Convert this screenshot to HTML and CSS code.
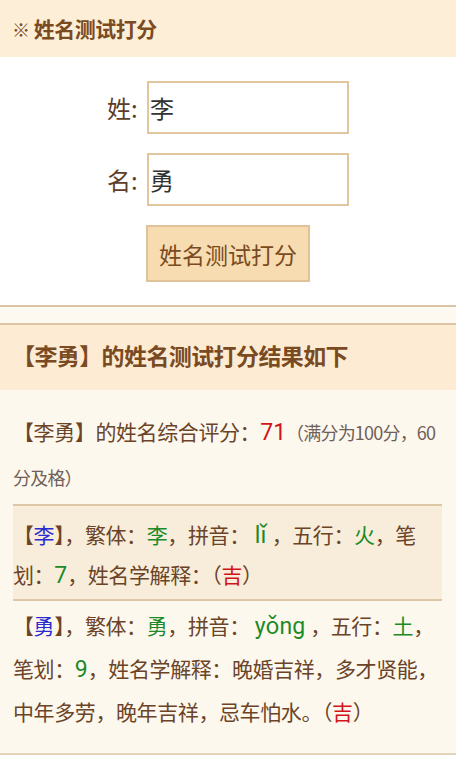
FILE: index.html
```html
<!DOCTYPE html>
<html lang="zh">
<head>
<meta charset="utf-8">
<link rel="stylesheet" href="styles.css">
</head>
<body>
<div class="page">
  <div class="top-title"><span class="mark">※</span> 姓名测试打分</div>
  <form class="form">
    <div class="row"><label class="lbl">姓:</label><input class="inp" type="text" value="李"></div>
    <div class="row"><label class="lbl">名:</label><input class="inp" type="text" value="勇"></div>
    <div class="btn-row"><button type="button" class="btn">姓名测试打分</button></div>
  </form>
  <div class="sep"></div>
  <div class="result-title">【李勇】的姓名测试打分结果如下</div>
  <div class="result">
    <p class="para score">【李勇】的姓名综合评分：<span class="red num">71</span><span class="note">（满分为100分，60分及格）</span></p>
    <p class="para box">【<span class="blue">李</span>】，繁体：<span class="green">李</span>，拼音：<span class="green py">lǐ</span>，五行：<span class="green">火</span>，笔划：<span class="green num">7</span>，姓名学解释：（<span class="red">吉</span>）</p>
    <p class="para last">【<span class="blue">勇</span>】，繁体：<span class="green">勇</span>，拼音：<span class="green py">yǒng</span>，五行：<span class="green">土</span>，笔划：<span class="green num">9</span>，姓名学解释：晚婚吉祥，多才贤能，中年多劳，晚年吉祥，忌车怕水。（<span class="red">吉</span>）</p>
  </div>
</div>
</body>
</html>
```
FILE: styles.css
```css
html, body {
  margin: 0;
  padding: 0;
  background: #ffffff;
}
body {
  font-family: "Noto Sans CJK SC", "Noto Sans", sans-serif;
  color: #6b4428;
}
.page {
  width: 456px;
}
.top-title {
  background: #fdefd7;
  height: 57px;
  line-height: 56px;
  padding-left: 12px;
  font-size: 21px;
  font-weight: bold;
  color: #7a4a22;
  letter-spacing: -0.5px;
}
.mark {
  font-size: 18px;
}
.form {
  background: #ffffff;
  padding: 24px 0 23px;
  display: flex;
  flex-direction: column;
  align-items: center;
  gap: 19px;
  margin: 0;
}
.row {
  display: flex;
  align-items: center;
  gap: 10px;
}
.lbl {
  font-size: 24px;
  color: #5e3e2a;
  width: 30px;
  text-align: right;
}
.inp {
  box-sizing: border-box;
  width: 202px;
  height: 53px;
  border: 2px solid #e2c79e;
  background: #fff;
  font-family: "Noto Sans CJK SC", sans-serif;
  font-size: 24px;
  color: #333;
  padding: 0 1px;
  outline: none;
  margin: 0;
}
.btn-row {
  display: flex;
  justify-content: center;
}
.btn {
  box-sizing: border-box;
  width: 164px;
  height: 57px;
  background: #f6dcb0;
  border: 2px solid #dfc297;
  font-family: "Noto Sans CJK SC", sans-serif;
  font-size: 23px;
  color: #7a4a22;
  padding: 0;
  margin-left: 0;
}
.sep {
  height: 16px;
  background: #fdf9f1;
  border-top: 2px solid #dcc5a2;
  border-bottom: 2px solid #dcc5a2;
}
.result-title {
  background: #fdecd3;
  height: 65px;
  line-height: 60px;
  padding-left: 12px;
  font-size: 23px;
  letter-spacing: -0.6px;
  font-weight: bold;
  color: #7a4a22;
}
.result {
  background: #fdf8ee;
  padding: 19px 14px 20px 13px;
  border-bottom: 2px solid #e3d3b8;
}
.para {
  margin: 0;
  font-size: 21px;
  letter-spacing: -0.4px;
  line-height: 44px;
  color: #6b4428;
}
.score {
  line-height: 45px;
  padding-bottom: 5px;
}
.note {
  font-size: 18px;
  letter-spacing: -0.8px;
  color: #6e6058;
  line-height: 1;
}
.box {
  background: #f7edda;
  border-top: 2px solid #dcc8a6;
  border-bottom: 2px solid #dcc8a6;
  padding: 8px 0 5px;
  line-height: 40px;
}
.last {
  padding-top: 3px;
  line-height: 43px;
}
.num, .py {
  font-family: "Roboto", "Noto Sans CJK SC", sans-serif;
  font-size: 23px;
  letter-spacing: 0;
  line-height: 1;
}
.py {
  padding: 0 5px;
}
.note .num {
  font-size: 18px;
}
.red { color: #d0141a; }
.green { color: #1c8a28; }
.blue { color: #2b2bd0; }
```
